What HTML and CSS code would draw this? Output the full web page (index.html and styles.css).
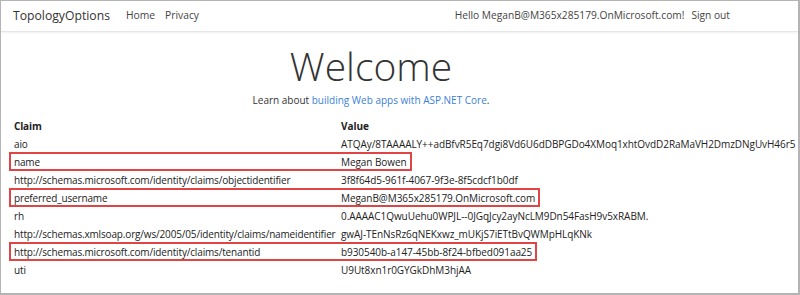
FILE: index.html
```html
<!DOCTYPE html>
<html>
<head>
<meta charset="utf-8">
<link rel="stylesheet" href="styles.css">
</head>
<body>
<div class="frame">
  <header class="navbar">
    <div class="nav-left">
      <span class="brand">TopologyOptions</span>
      <span class="nav-link">Home</span>
      <span class="nav-link">Privacy</span>
    </div>
    <div class="nav-right">
      <span class="nav-link">Hello MeganB@M365x285179.OnMicrosoft.com!</span>
      <span class="nav-link">Sign out</span>
    </div>
  </header>
  <main class="main">
    <h1 class="title">Welcome</h1>
    <p class="lead">Learn about <a class="link">building Web apps with ASP.NET Core</a>.</p>
    <div class="claims">
      <div class="row head"><span class="claim">Claim</span><span>Value</span></div>
      <div class="row"><span class="claim">aio</span><span>ATQAy/8TAAAALY++adBfvR5Eq7dgi8Vd6U6dDBPGDo4XMoq1xhtOvdD2RaMaVH2DmzDNgUvH46r5</span></div>
      <div class="row hl"><span class="claim">name</span><span>Megan Bowen</span></div>
      <div class="row"><span class="claim">http://schemas.microsoft.com/identity/claims/objectidentifier</span><span>3f8f64d5-961f-4067-9f3e-8f5cdcf1b0df</span></div>
      <div class="row hl"><span class="claim">preferred_username</span><span>MeganB@M365x285179.OnMicrosoft.com</span></div>
      <div class="row"><span class="claim">rh</span><span>0.AAAAC1QwuUehu0WPJL--0JGqJcy2ayNcLM9Dn54FasH9v5xRABM.</span></div>
      <div class="row"><span class="claim">http://schemas.xmlsoap.org/ws/2005/05/identity/claims/nameidentifier</span><span>gwAJ-TEnNsRz6qNEKxwz_mUKjS7iETtBvQWMpHLqKNk</span></div>
      <div class="row hl"><span class="claim">http://schemas.microsoft.com/identity/claims/tenantid</span><span>b930540b-a147-45bb-8f24-bfbed091aa25</span></div>
      <div class="row"><span class="claim">uti</span><span>U9Ut8xn1r0GYGkDhM3hjAA</span></div>
    </div>
  </main>
</div>
</body>
</html>
```

FILE: styles.css
```css
* { box-sizing: border-box; }
html, body { margin: 0; padding: 0; background: #fff; }
body {
  font-family: "Segoe UI", "Open Sans", "Noto Sans", sans-serif;
  color: #212529;
}
.frame {
  width: 800px;
  height: 295px;
  border-top: 1px solid #b4b4b4;
  border-left: 1px solid #b4b4b4;
  border-right: 2px solid #b4b4b4;
  border-bottom: 2px solid #b4b4b4;
  overflow: hidden;
}
.navbar {
  height: 31px;
  display: flex;
  align-items: center;
  justify-content: space-between;
  padding: 0 68px 2px 12px;
  border-bottom: 1px solid #e6e6e6;
  box-shadow: 0 1px 2px rgba(0,0,0,0.06);
}
.nav-left, .nav-right { display: flex; align-items: center; }
.brand { font-size: 12.2px; color: #333; margin-right: 16px; }
.nav-left .nav-link { font-size: 10.3px; color: #444; margin-right: 10px; }
.nav-right .nav-link { font-size: 10.2px; color: #444; margin-left: 7px; }
.main { padding: 0 0 0 13px; }
.title {
  width: 714px;
  margin: 11px 0 0 0;
  text-align: center;
  font-weight: 300;
  font-size: 39px;
  line-height: 46px;
  color: #333;
}
.lead {
  width: 714px;
  margin: 4px 0 0 0;
  text-align: center;
  font-size: 10px;
  line-height: 14px;
  color: #333;
}
.link { color: #3b7fd6; text-decoration: none; }
.claims {
  margin-top: 10px;
  display: flex;
  flex-direction: column;
  font-size: 10px;
  letter-spacing: -0.06px;
  color: #222;
}
.row {
  display: grid;
  grid-template-columns: 327px max-content;
  width: max-content;
  height: 18px;
  line-height: 18px;
  white-space: nowrap;
  position: relative;
}
.claim { letter-spacing: -0.16px; }
.head { font-weight: 700; }
.hl::after {
  content: "";
  position: absolute;
  top: -1px;
  bottom: 0;
  left: -5px;
  right: -5px;
  border: 2px solid #e04545;
}
```
